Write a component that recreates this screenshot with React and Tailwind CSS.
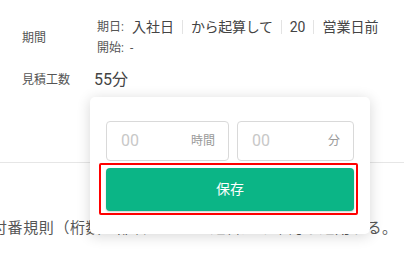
import React from 'react';

const Sep = () => <span className="inline-block w-px h-[14px] bg-[#e3e3e3] mx-[8px]" />;

const App = () => {
  return (
    <div className="relative w-[404px] h-[255px] bg-white overflow-hidden font-['Roboto','Noto_Sans_CJK_JP',sans-serif] text-[#444]">
      <div className="pt-[17px] pl-[22px]">
        {/* 期間 */}
        <div className="flex items-center">
          <div className="w-[75px] text-[12px] text-[#555]">期間</div>
          <div>
            <div className="flex items-center h-[20px]">
              <span className="text-[12px] text-[#555] mr-[8px]">期日:</span>
              <span className="text-[14px]">入社日</span>
              <Sep />
              <span className="text-[14px] tracking-[-0.3px]">から起算して</span>
              <Sep />
              <span className="text-[14px]">20</span>
              <Sep />
              <span className="text-[14px]">営業日前</span>
            </div>
            <div className="flex items-center h-[21px] text-[12px] text-[#555]">
              <span className="mr-[6px]">開始:</span>
              <span>-</span>
            </div>
          </div>
        </div>

        {/* 見積工数 */}
        <div className="flex items-center mt-[10px] h-[24px]">
          <div className="w-[72px] text-[12px] text-[#555]">見積工数</div>
          <div className="text-[16px]">55分</div>
        </div>
      </div>

      <div className="mt-[70px] border-t border-[#e6e6e6]" />

      <p className="mt-[53px] -ml-[8px] whitespace-nowrap text-[15px] leading-[24px] tracking-[0.6px] text-[#555]">
        付番規則（桁数・部署コード・連番）を確認し適用する。
      </p>

      {/* popover */}
      <div className="absolute left-[90px] top-[97px] w-[280px] h-[137px] bg-white rounded-[5px] shadow-[0_2px_14px_rgba(0,0,0,0.16)] px-[16px] pt-[24px]">
        <div className="flex gap-[8px]">
          <div className="w-[123px] h-[40px] border border-[#d9d9d9] rounded-[4px] flex items-center justify-between pl-[14px] pr-[13px]">
            <span className="text-[16px] text-[#c8c8c8]">00</span>
            <span className="text-[12px] text-[#999]">時間</span>
          </div>
          <div className="flex-1 h-[40px] border border-[#d9d9d9] rounded-[4px] flex items-center justify-between pl-[14px] pr-[13px]">
            <span className="text-[16px] text-[#c8c8c8]">00</span>
            <span className="text-[12px] text-[#999]">分</span>
          </div>
        </div>
        <div className="relative mt-[7px]">
          <button className="w-full h-[43px] rounded-[4px] bg-[#0bb586] text-white text-[14px] shadow-[0_1px_2px_rgba(0,0,0,0.2)]">
            保存
          </button>
          <span className="absolute -left-[7px] -top-[5px] -right-[4px] -bottom-[4px] border-2 border-[#ff0000] rounded-[2px] pointer-events-none" />
        </div>
      </div>
    </div>
  );
};

export default App;
